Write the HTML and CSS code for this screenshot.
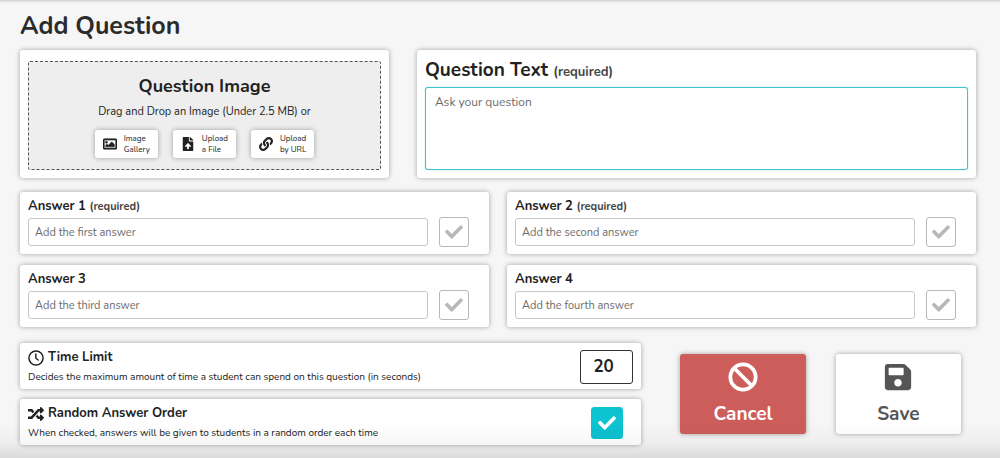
FILE: index.html
```html
<!DOCTYPE html>
<html lang="en">
<head>
  <meta charset="UTF-8">
  <title>Add Question</title>
  <meta name="viewport" content="width=device-width, initial-scale=1">
  <link rel="stylesheet" href="styles.css">
</head>
<body>
  <svg class="icon-defs" aria-hidden="true">
    <symbol id="icon-check" viewBox="0 0 512 512">
      <path d="M173.898 439.404l-166.4-166.4c-9.997-9.997-9.997-26.206 0-36.204l36.203-36.204c9.997-9.998 26.207-9.998 36.204 0L192 312.69 432.095 72.596c9.997-9.997 26.207-9.997 36.204 0l36.203 36.204c9.997 9.997 9.997 26.206 0 36.204l-294.4 294.401c-9.998 9.997-26.207 9.997-36.204-.001z"/>
    </symbol>
  </svg>

  <form class="page">
    <h1 class="page-title">Add Question</h1>

    <div class="question-row">
      <section class="card">
        <div class="drop-zone">
          <h2 class="drop-title">Question Image</h2>
          <p class="drop-text">Drag and Drop an Image (Under 2.5 MB) or</p>
          <div class="drop-actions">
            <button type="button" class="drop-btn">
              <svg class="drop-icon" viewBox="0 0 512 512" aria-hidden="true"><path stroke="currentColor" stroke-width="20" d="M464 64H48C21.49 64 0 85.49 0 112v288c0 26.51 21.49 48 48 48h416c26.51 0 48-21.49 48-48V112c0-26.51-21.49-48-48-48zm-6 336H54a6 6 0 0 1-6-6V118a6 6 0 0 1 6-6h404a6 6 0 0 1 6 6v276a6 6 0 0 1-6 6zM128 152c-22.091 0-40 17.909-40 40s17.909 40 40 40 40-17.909 40-40-17.909-40-40-40zM96 352h320v-80l-87.515-87.515c-4.686-4.686-12.284-4.686-16.971 0L192 304l-39.515-39.515c-4.686-4.686-12.284-4.686-16.971 0L96 304v48z"/></svg>
              <span>Image<br>Gallery</span>
            </button>
            <button type="button" class="drop-btn">
              <svg class="drop-icon" viewBox="-64 0 512 512" aria-hidden="true"><path d="M224 136V0H24C10.7 0 0 10.7 0 24v464c0 13.3 10.7 24 24 24h336c13.3 0 24-10.7 24-24V160H248c-13.2 0-24-10.8-24-24zm65.18 216.01H224v80c0 8.84-7.16 16-16 16h-32c-8.84 0-16-7.16-16-16v-80H94.82c-14.28 0-21.41-17.29-11.27-27.36l96.42-95.7c6.65-6.61 17.39-6.61 24.04 0l96.42 95.7c10.15 10.07 3.03 27.36-11.25 27.36zM377 105L279.1 7c-4.5-4.5-10.6-7-17-7H256v128h128v-6.1c0-6.3-2.5-12.4-7-16.9z"/></svg>
              <span>Upload<br>a File</span>
            </button>
            <button type="button" class="drop-btn">
              <svg class="drop-icon" viewBox="0 0 512 512" aria-hidden="true"><path d="M326.612 185.391c59.747 59.809 58.927 155.698.36 214.59-.11.12-.24.25-.36.37l-67.2 67.2c-59.27 59.27-155.699 59.262-214.96 0-59.27-59.26-59.27-155.7 0-214.96l37.106-37.106c9.84-9.84 26.786-3.3 27.294 10.606.648 17.722 3.826 35.527 9.69 52.721 1.986 5.822.567 12.262-3.783 16.612l-13.087 13.087c-28.026 28.026-28.905 73.66-1.155 101.96 28.024 28.579 74.086 28.749 102.325.51l67.2-67.19c28.191-28.191 28.073-73.757 0-101.83-3.701-3.694-7.429-6.564-10.341-8.569a16.037 16.037 0 0 1-6.947-12.606c-.396-10.567 3.348-21.456 11.698-29.806l21.054-21.055c5.521-5.521 14.182-6.199 20.584-1.731a152.482 152.482 0 0 1 20.522 17.197zM467.547 44.449c-59.261-59.262-155.69-59.27-214.96 0l-67.2 67.2c-.12.12-.25.25-.36.37-58.566 58.892-59.387 154.781.36 214.59a152.454 152.454 0 0 0 20.521 17.196c6.402 4.468 15.064 3.789 20.584-1.731l21.054-21.055c8.35-8.35 12.094-19.239 11.698-29.806a16.037 16.037 0 0 0-6.947-12.606c-2.912-2.005-6.64-4.875-10.341-8.569-28.073-28.073-28.191-73.639 0-101.83l67.2-67.19c28.239-28.239 74.3-28.069 102.325.51 27.75 28.3 26.872 73.934-1.155 101.96l-13.087 13.087c-4.35 4.35-5.769 10.79-3.783 16.612 5.864 17.194 9.042 34.999 9.69 52.721.509 13.906 17.454 20.446 27.294 10.606l37.106-37.106c59.271-59.259 59.271-155.699.001-214.959z"/></svg>
              <span>Upload<br>by URL</span>
            </button>
          </div>
        </div>
      </section>

      <section class="card question-card">
        <label class="question-label" for="question">Question Text <span class="required">(required)</span></label>
        <textarea class="question-input" id="question" placeholder="Ask your question"></textarea>
      </section>
    </div>

    <div class="answer-grid">
      <div class="card answer-card">
        <label class="label" for="answer1">Answer 1 <span class="required">(required)</span></label>
        <div class="answer-line">
          <input class="answer-input" id="answer1" type="text" placeholder="Add the first answer">
          <label class="check">
            <input type="checkbox" aria-label="Answer 1 is correct">
            <svg aria-hidden="true"><use href="#icon-check"/></svg>
          </label>
        </div>
      </div>
      <div class="card answer-card">
        <label class="label" for="answer2">Answer 2 <span class="required">(required)</span></label>
        <div class="answer-line">
          <input class="answer-input" id="answer2" type="text" placeholder="Add the second answer">
          <label class="check">
            <input type="checkbox" aria-label="Answer 2 is correct">
            <svg aria-hidden="true"><use href="#icon-check"/></svg>
          </label>
        </div>
      </div>
      <div class="card answer-card">
        <label class="label" for="answer3">Answer 3</label>
        <div class="answer-line">
          <input class="answer-input" id="answer3" type="text" placeholder="Add the third answer">
          <label class="check">
            <input type="checkbox" aria-label="Answer 3 is correct">
            <svg aria-hidden="true"><use href="#icon-check"/></svg>
          </label>
        </div>
      </div>
      <div class="card answer-card">
        <label class="label" for="answer4">Answer 4</label>
        <div class="answer-line">
          <input class="answer-input" id="answer4" type="text" placeholder="Add the fourth answer">
          <label class="check">
            <input type="checkbox" aria-label="Answer 4 is correct">
            <svg aria-hidden="true"><use href="#icon-check"/></svg>
          </label>
        </div>
      </div>
    </div>

    <div class="bottom-row">
      <div class="settings">
        <div class="card setting">
          <div class="setting-info">
            <label class="label setting-label" for="time-limit">
              <svg class="setting-icon" viewBox="0 0 512 512" aria-hidden="true"><circle cx="256" cy="256" r="226" fill="none" stroke="currentColor" stroke-width="48"/><path d="M250 128v136l76 56" fill="none" stroke="currentColor" stroke-width="46" stroke-linecap="round" stroke-linejoin="round"/></svg>
              Time Limit
            </label>
            <p class="setting-desc">Decides the maximum amount of time a student can spend on this question (in seconds)</p>
          </div>
          <input class="time-input" id="time-limit" type="text" inputmode="numeric" value="20">
        </div>
        <div class="card setting">
          <div class="setting-info">
            <label class="label setting-label" for="random-order">
              <svg class="setting-icon" viewBox="0 0 512 512" aria-hidden="true"><path d="M504.971 359.029c9.373 9.373 9.373 24.569 0 33.941l-80 79.984c-15.01 15.01-40.971 4.49-40.971-16.971V416h-58.785a12.004 12.004 0 0 1-8.773-3.812l-70.556-75.596 53.333-57.143L352 336h32v-39.981c0-21.438 25.943-31.998 40.971-16.971l80 79.981zM12 176h84l52.781 56.551 53.333-57.143-70.556-75.596A11.999 11.999 0 0 0 122.785 96H12c-6.627 0-12 5.373-12 12v56c0 6.627 5.373 12 12 12zm372 0v39.984c0 21.46 25.961 31.98 40.971 16.971l80-79.984c9.373-9.373 9.373-24.569 0-33.941l-80-79.981C409.943 24.021 384 34.582 384 56.019V96h-58.785a12.004 12.004 0 0 0-8.773 3.812L96 336H12c-6.627 0-12 5.373-12 12v56c0 6.627 5.373 12 12 12h110.785c3.326 0 6.503-1.381 8.773-3.812L352 176h32z"/></svg>
              Random Answer Order
            </label>
            <p class="setting-desc">When checked, answers will be given to students in a random order each time</p>
          </div>
          <label class="check check-large">
            <input id="random-order" type="checkbox" aria-label="Random Answer Order" checked>
            <svg aria-hidden="true"><use href="#icon-check"/></svg>
          </label>
        </div>
      </div>

      <div class="actions">
        <button type="button" class="action-btn cancel-btn">
          <svg class="action-icon" viewBox="0 0 512 512" aria-hidden="true"><circle cx="256" cy="256" r="216" fill="none" stroke="currentColor" stroke-width="64"/><path d="M103 103l306 306" stroke="currentColor" stroke-width="64"/></svg>
          Cancel
        </button>
        <button type="submit" class="action-btn save-btn">
          <svg class="action-icon" viewBox="-32 0 512 512" aria-hidden="true"><path d="M433.941 129.941l-83.882-83.882A48 48 0 0 0 316.118 32H48C21.49 32 0 53.49 0 80v352c0 26.51 21.49 48 48 48h352c26.51 0 48-21.49 48-48V163.882a48 48 0 0 0-14.059-33.941zM224 416c-35.346 0-64-28.654-64-64 0-35.346 28.654-64 64-64s64 28.654 64 64c0 35.346-28.654 64-64 64zm96-304.52V212c0 6.627-5.373 12-12 12H76c-6.627 0-12-5.373-12-12V108c0-6.627 5.373-12 12-12h228.52c3.183 0 6.235 1.264 8.485 3.515l3.48 3.48A11.996 11.996 0 0 1 320 111.48z"/></svg>
          Save
        </button>
      </div>
    </div>
  </form>
</body>
</html>
```

FILE: styles.css
```css
:root {
  --bg: #f6f6f6;
  --text: #222;
  --muted: #6b6b6b;
  --line: #c8c8c8;
  --accent: #0dc2d1;
  --danger: #cd5d5b;
  --card-shadow: 0 0 5px rgba(0,0,0,0.35);
}
* {
  box-sizing: border-box;
}
body {
  margin: 0;
  min-height: 100vh;
  font-family: Nunito, Lato, 'Noto Sans', sans-serif;
  font-size: 11px;
  color: var(--text);
  background: var(--bg);
  box-shadow: inset 0 4px 3px -3px #c4c4c4;
}
/* Soft shade along the bottom edge of the window */
body::after {
  content: "";
  position: fixed;
  left: 0;
  right: 0;
  bottom: 0;
  height: 36px;
  background: linear-gradient(to bottom, rgba(0,0,0,0) 0%, rgba(0,0,0,0.03) 60%, rgba(0,0,0,0.11) 100%);
  pointer-events: none;
}
button, input, textarea {
  font-family: inherit;
  color: inherit;
}
svg {
  fill: currentColor;
  flex: none;
}
.icon-defs {
  display: none;
}
.page {
  padding: 10px 24px 12px 20px;
}
.page-title {
  margin: 0 0 7px;
  font-size: 25px;
  line-height: 33px;
  font-weight: 700;
  color: #2b2b2b;
}
.card {
  background: #fff;
  border-radius: 3px;
  padding: 8px;
  box-shadow: var(--card-shadow);
}
.question-row {
  display: grid;
  grid-template-columns: 33fr 50fr;
  gap: 28px;
  margin-bottom: 14px;
}
.drop-zone {
  display: flex;
  flex-direction: column;
  align-items: center;
  margin-top: 3px;
  padding: 11px 8px;
  background: #eee;
  border: 1px dashed #555;
  border-radius: 2px;
}
.drop-title {
  margin: 0 0 5px;
  font-size: 18px;
  line-height: 26px;
  font-weight: 700;
}
.drop-text {
  margin: 0 0 10px;
  font-size: 11px;
  line-height: 16px;
}
.drop-actions {
  display: flex;
  gap: 15px;
}
.drop-btn {
  display: flex;
  align-items: center;
  gap: 7px;
  padding: 3px 8px;
  border: none;
  border-radius: 3px;
  background: #fff;
  font-size: 8px;
  line-height: 11px;
  text-align: left;
  box-shadow: var(--card-shadow);
  cursor: pointer;
}
.drop-icon {
  width: 14px;
  height: 14px;
}
.question-card {
  display: flex;
  flex-direction: column;
}
.question-label {
  font-size: 19px;
  line-height: 24px;
  font-weight: 700;
  margin-bottom: 5px;
}
.required {
  font-size: 11px;
  line-height: 1;
  color: #444;
}
.question-label .required {
  font-size: 13px;
}
.question-input {
  flex: 1;
  width: 100%;
  padding: 6px 9px;
  border: 1px solid #3fc1d0;
  border-radius: 3px;
  background: #fff;
  font-size: 12px;
  line-height: 16px;
  resize: none;
  outline: none;
  box-shadow: 0 0 1px #3fc1d0;
}
::placeholder {
  color: var(--muted);
  opacity: 1;
}
.answer-grid {
  display: grid;
  grid-template-columns: 1fr 1fr;
  gap: 11px 18px;
  margin-bottom: 16px;
}
.answer-card {
  padding: 5px 20px 7px 8px;
}
.label {
  display: block;
  font-size: 13px;
  line-height: 19px;
  font-weight: 700;
}
.answer-line {
  display: flex;
  align-items: center;
  gap: 11px;
  margin-top: 1px;
}
.answer-input {
  flex: 1;
  min-width: 0;
  height: 28px;
  padding: 0 6px;
  border: 1px solid var(--line);
  border-radius: 3px;
  background: #fff;
  font-size: 11px;
}
/* The tick is drawn over the box by sharing one grid cell */
.check {
  display: grid;
  place-items: center;
  color: #b8b8b8;
  cursor: pointer;
}
.check input {
  grid-area: 1 / 1;
  appearance: none;
  width: 30px;
  height: 30px;
  margin: 0;
  border: 1px solid #b8b8b8;
  border-radius: 3px;
  background: #fff;
}
.check svg {
  grid-area: 1 / 1;
  width: 18px;
  height: 18px;
  z-index: 1;
  pointer-events: none;
}
.check input:checked {
  background: var(--accent);
  border-color: var(--accent);
}
.check input:checked + svg {
  color: #fff;
}
.check-large {
  margin-right: 10px;
}
.check-large input {
  width: 32px;
  height: 32px;
}
.bottom-row {
  display: grid;
  grid-template-columns: 13fr 7fr;
}
.settings {
  display: flex;
  flex-direction: column;
  gap: 10px;
}
.setting {
  display: flex;
  align-items: center;
  justify-content: space-between;
  padding: 5px 8px 4px;
}
.setting-label {
  display: flex;
  align-items: center;
  gap: 4px;
}
.setting-icon {
  width: 16px;
  height: 16px;
}
.setting-desc {
  margin: 3px 0 0;
  font-size: 10px;
  line-height: 15px;
}
.time-input {
  width: 53px;
  height: 34px;
  padding: 0 12px;
  border: 1px solid #333;
  border-radius: 3px;
  background: #fff;
  font-size: 17px;
  font-weight: 700;
}
.actions {
  display: grid;
  grid-template-columns: 1fr 1fr;
  gap: 30px;
  align-items: center;
  padding: 0 15px 0 39px;
}
.action-btn {
  display: flex;
  flex-direction: column;
  align-items: center;
  gap: 10px;
  padding: 8px;
  border: none;
  border-radius: 3px;
  font-size: 19px;
  line-height: 24px;
  font-weight: 700;
  box-shadow: var(--card-shadow);
  cursor: pointer;
}
.action-icon {
  width: 30px;
  height: 30px;
}
.cancel-btn {
  background: var(--danger);
  color: #fff;
}
.save-btn {
  background: #fff;
  color: #555;
}
@media (max-width: 700px) {
  .question-row, .answer-grid, .bottom-row {
    grid-template-columns: 1fr;
  }
  .actions {
    padding: 16px 0 0;
  }
}
```
